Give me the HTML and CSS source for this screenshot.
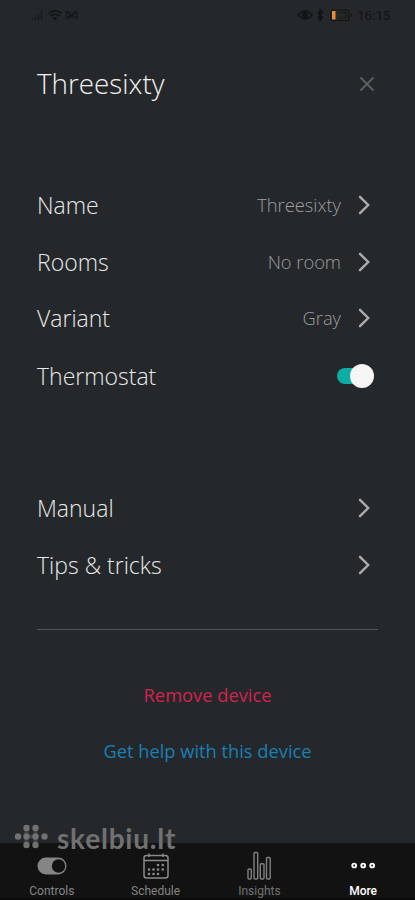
FILE: index.html
```html
<!DOCTYPE html>
<html lang="en">
<head>
<meta charset="utf-8">
<title>Threesixty</title>
<link rel="stylesheet" href="styles.css">
</head>
<body>
<div class="screen">
  <div class="status">
    <svg class="status-left" width="50" height="14" viewBox="0 0 50 14">
      <path d="M1.5 12V10M4.500 12V8.500M7.500 12V6M10.500 12V3" stroke="#16191a" stroke-width="1.3" fill="none"/>
      <path d="M17.500 5.500Q24 0 30.500 5.500M19.500 8Q24 4.500 28.500 8M22 10.500Q24 9 26 10.500" stroke="#121516" stroke-width="1.600" fill="none"/>
      <path d="M24 12.500l-1.500-1.700h3z" fill="#121516"/>
      <path d="M35.500 3.500v7l4.500-3.500zM46 3.500v7L41.500 7zM37 3l6 8M44 3l-6 8" stroke="#15181a" stroke-width="1.100" fill="none"/>
    </svg>
    <div class="status-right">
      <svg width="56" height="14" viewBox="0 0 56 14">
        <path d="M1 7Q8 -1 15 7Q8 15 1 7Z" fill="none" stroke="#111415" stroke-width="1.500"/>
        <circle cx="8" cy="7" r="3" fill="#111415"/>
        <path d="M20.500 4l5 5.500-2.500 3V1.500l2.500 3-5 5.500" fill="none" stroke="#111415" stroke-width="1.400"/>
        <rect x="34" y="2" width="18" height="10.500" rx="2" fill="none" stroke="#111415" stroke-width="1.200"/>
        <path d="M54.500 5v4M41 4.500h8v5.500h-8" stroke="#171a1b" fill="none" stroke-width="1.200"/>
        <rect x="35" y="3" width="3.500" height="8.500" fill="#e98b32"/>
      </svg>
      <span>16:15</span>
    </div>
  </div>

  <main class="content">
    <header class="title-row">
      <h1>Threesixty</h1>
      <svg class="close" width="16" height="16" viewBox="0 0 16 16"><path d="M1.500 1.500l13 13M14.500 1.500l-13 13"/></svg>
    </header>

    <section class="group">
      <div class="row"><span class="label">Name</span><span class="value">Threesixty</span><svg class="chev" viewBox="0 0 12 20"><path d="M2 1.800L10.200 10L2 18.200"/></svg></div>
      <div class="row"><span class="label">Rooms</span><span class="value">No room</span><svg class="chev" viewBox="0 0 12 20"><path d="M2 1.800L10.200 10L2 18.200"/></svg></div>
      <div class="row"><span class="label">Variant</span><span class="value">Gray</span><svg class="chev" viewBox="0 0 12 20"><path d="M2 1.800L10.200 10L2 18.200"/></svg></div>
      <div class="row row-toggle"><span class="label">Thermostat</span><span class="toggle"><span class="knob"></span></span></div>
    </section>

    <section class="group links">
      <div class="row"><span class="label">Manual</span><svg class="chev" viewBox="0 0 12 20"><path d="M2 1.800L10.200 10L2 18.200"/></svg></div>
      <div class="row"><span class="label">Tips &amp; tricks</span><svg class="chev" viewBox="0 0 12 20"><path d="M2 1.800L10.200 10L2 18.200"/></svg></div>
    </section>

    <div class="divider"></div>
    <div class="action remove">Remove device</div>
    <div class="action help">Get help with this device</div>
  </main>

  <nav class="tabs">
    <div class="tab">
      <svg width="36" height="30" viewBox="0 0 36 30"><rect x="3.500" y="6.500" width="29" height="17" rx="8.500" fill="#858585"/><circle cx="24.500" cy="15" r="6.700" fill="#121212"/></svg>
      <span>Controls</span>
    </div>
    <div class="tab">
      <svg width="36" height="30" viewBox="0 0 36 30" fill="none" stroke="#8a8a8a" stroke-width="1.500"><rect x="6" y="4.500" width="24" height="22.500" rx="2.500"/><path d="M6 9.500h24M11 2.500v3.500M25 2.500v3.500"/><g fill="#8a8a8a" stroke="none"><circle cx="20" cy="14" r="1.300"/><circle cx="24.800" cy="14" r="1.300"/><circle cx="11" cy="18.500" r="1.300"/><circle cx="15.500" cy="18.500" r="1.300"/><circle cx="20" cy="18.500" r="1.300"/><circle cx="24.800" cy="18.500" r="1.300"/><circle cx="11" cy="23" r="1.300"/><circle cx="15.500" cy="23" r="1.300"/><circle cx="20" cy="23" r="1.300"/></g></svg>
      <span>Schedule</span>
    </div>
    <div class="tab insights">
      <svg width="36" height="30" viewBox="0 0 36 30" fill="none" stroke="#808080" stroke-width="1.400"><rect x="7" y="18" width="3.300" height="10" rx="1"/><rect x="13" y="1.500" width="3.700" height="26.500" rx="1"/><rect x="19.300" y="12.700" width="3.700" height="15.300" rx="1"/><rect x="25.500" y="6.500" width="3.700" height="21.500" rx="1"/></svg>
      <span>Insights</span>
    </div>
    <div class="tab active">
      <svg width="36" height="30" viewBox="0 0 36 30" fill="none" stroke="#fff" stroke-width="1.900"><circle cx="9.200" cy="14.500" r="1.900"/><circle cx="18.200" cy="14.500" r="1.900"/><circle cx="27.200" cy="14.500" r="1.900"/></svg>
      <span>More</span>
    </div>
  </nav>

  <div class="watermark">
    <svg width="34" height="26" viewBox="0 0 34 26" fill="#707171"><circle cx="12.500" cy="4" r="3.200"/><circle cx="21.500" cy="4" r="3.200"/><circle cx="4" cy="12.500" r="3.200"/><circle cx="12.500" cy="12.500" r="3.200"/><circle cx="21.500" cy="12.500" r="3.200"/><circle cx="30.500" cy="12.500" r="3.200"/><circle cx="12.500" cy="21" r="3.200"/><circle cx="21.500" cy="21" r="3.200"/><path d="M10.500 4h4v17h-4zM19.500 4h4v17h-4zM12 10.800h9v3.500h-9z" opacity=".35"/></svg>
    <span>skelbiu.lt</span>
  </div>
</div>
</body>
</html>
```
FILE: styles.css
```css
* { box-sizing: border-box; }
body { margin: 0; background: #25282b; font-family: "Open Sans", sans-serif; }
.screen {
  position: relative;
  width: 415px;
  height: 900px;
  display: flex;
  flex-direction: column;
  overflow: hidden;
  background: #25282b;
}
.status {
  height: 30px;
  padding: 0 25px 0 31px;
  display: flex;
  justify-content: space-between;
  align-items: center;
}
.status-right {
  display: flex;
  align-items: center;
  gap: 3px;
  font: 13.5px/30px Roboto, sans-serif;
  color: #111415;
}
.status-right span { width: 33px; white-space: nowrap; }
.status-right svg { margin-right: 1px; }
.content { flex: 1; padding: 0 37px; }
.title-row {
  height: 108px;
  display: flex;
  align-items: center;
  justify-content: space-between;
  padding-right: 3px;
}
h1 { margin: -2px 0 0; font-size: 27.8px; line-height: 40px; font-weight: 300; color: #f0f1f1; }
.close path { fill: none; stroke: #5d6061; stroke-width: 1.8; }
.group { padding-top: 39px; }
.row { height: 56.5px; display: flex; align-items: center; }
.row-toggle { height: 58px; }
.label { flex: 1; font-size: 23px; line-height: 32px; font-weight: 300; color: #e8e9e9; }
.value { font-size: 18.3px; line-height: 26px; font-weight: 300; color: #9b9d9e; margin-right: 17px; }
.chev { width: 12px; height: 20px; margin-right: 8px; }
.chev path { fill: none; stroke: #aaabac; stroke-width: 2.4; stroke-linecap: round; }
.toggle {
  position: relative;
  width: 37px;
  height: 24px;
  margin-right: 4px;
  display: flex;
  align-items: center;
  justify-content: flex-end;
}
.toggle::before {
  content: "";
  position: absolute;
  left: 0;
  top: 4px;
  width: 30px;
  height: 16px;
  border-radius: 8px;
  background: #0eada3;
}
.knob { position: relative; width: 24px; height: 24px; border-radius: 50%; background: #f6f5f6; }
.links { padding-top: 74.5px; }
.links .row { height: 57px; }
.divider { height: 1px; margin-top: 35.5px; background: #54585a; }
.action { height: 56px; line-height: 56px; text-align: center; font-size: 18.3px; }
.remove { margin-top: 37px; color: #d52150; }
.help { color: #197fb5; }
.tabs { height: 57px; display: flex; background: #121212; border-bottom: 2px solid #09090a; }
.tab {
  flex: 1;
  display: flex;
  flex-direction: column;
  align-items: center;
  padding-top: 8px;
  font: 12px/20px Roboto, sans-serif;
  color: #858585;
}
.tab svg { flex: none; }
.tab.active { color: #fff; font-weight: 500; }
.tab.insights { color: #747474; }
.watermark {
  position: absolute;
  left: 14px;
  top: 824px;
  display: flex;
  align-items: flex-start;
  gap: 9px;
  color: #707171;
}
.watermark span { font: 700 28px/28px Lato, sans-serif; letter-spacing: 0.8px; }
```
